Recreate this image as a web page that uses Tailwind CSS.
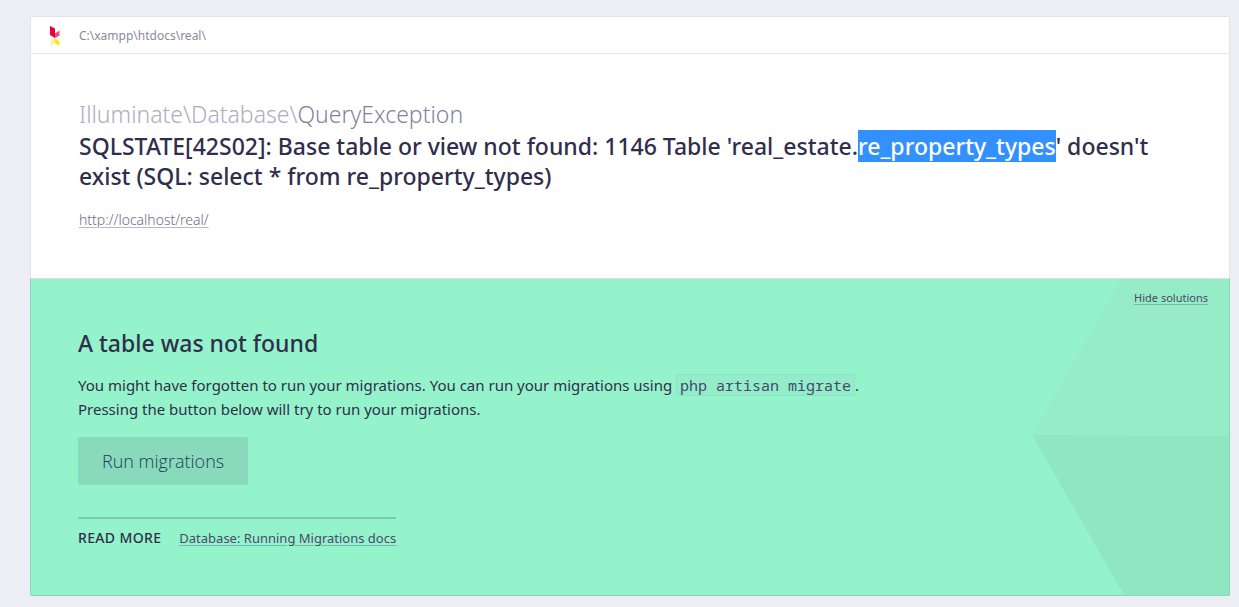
<!DOCTYPE html>
<html lang="en">
<head>
<meta charset="utf-8">
<title>A table was not found</title>
<script src="https://cdn.jsdelivr.net/npm/@tailwindcss/browser@4"></script>
</head>
<body class="min-h-screen bg-[#edeef3] pt-4 pr-[9px] pb-[11px] pl-[30px] font-['Noto_Sans',sans-serif] text-[#312e4d]">
<main>
  <section class="border border-b-0 border-[#e4e3ee] bg-white">
    <header class="flex h-[37px] items-center gap-[18px] border-b border-[#e4e3ee] pt-px pl-[18px] text-xs text-[#8b8a99]">
      <svg class="h-5 w-3" viewBox="0 0 12 20" aria-hidden="true">
        <path d="M1 0L6 2.500V12L1 9Z" fill="#e8003a"/>
        <path d="M6 7.500L10.500 4.500V9.500L6 12Z" fill="#ff4573"/>
        <path d="M6 12.500V17L1.500 19.500V15.500Z" fill="#fff08a"/>
        <path d="M6 12.500L10.500 15.500V19.500L6 17Z" fill="#ffe600"/>
      </svg>
      <span>C:\xampp\htdocs\real\</span>
    </header>
    <div class="px-12 pt-11 pb-12">
      <div class="text-[23px] leading-8 font-light text-[#8582a0]"><span class="text-[#aeacbf]">Illuminate\Database\</span>QueryException</div>
      <h1 class="mt-px text-[23px] leading-[30px] font-medium">SQLSTATE[42S02]: Base table or view not found: 1146 Table 'real_estate.<mark class="bg-[#3390ff] text-white">re_property_types</mark>' doesn't exist (SQL: select * from re_property_types)</h1>
      <div class="mt-[18px] text-sm leading-[21px] font-light"><a href="http://localhost/real/" class="text-[#6f6d83] underline decoration-[#b9b7cb] underline-offset-2">http://localhost/real/</a></div>
    </div>
  </section>
  <section class="relative overflow-hidden rounded-b-xs border border-t-[#dcdfe5] border-[#82d9b8] bg-[#94f3cb] px-[47px] pt-12 pb-[45px]">
    <svg class="absolute top-0 right-0 h-full w-[197px]" viewBox="0 0 197 316" preserveAspectRatio="none" aria-hidden="true">
      <path d="M89 0H197V157L0 156Z" fill="#96ecc7"/>
      <path d="M0 156L197 157V316H92Z" fill="#90e6c1"/>
    </svg>
    <button type="button" class="absolute top-[11px] right-[21px] text-[11px] leading-4 text-[#4b476d] underline decoration-[#75b9a9] underline-offset-2">Hide solutions</button>
    <div class="relative">
      <h2 class="text-[23px] leading-8 font-medium">A table was not found</h2>
      <p class="mt-[14px] text-[15px] leading-6">You might have forgotten to run your migrations. You can run your migrations using <code class="rounded-xs border border-[#8ae5c2] bg-[#92edc8] px-[3px] font-['Noto_Sans_Mono',monospace] text-[15px] leading-5 text-[#4b476d]">php artisan migrate</code>.<br>Pressing the button below will try to run your migrations.</p>
      <button type="button" class="mt-4 block h-12 rounded-xs bg-[#89dabd] px-6 font-['Open_Sans',sans-serif] text-lg font-light text-[#263a58]">Run migrations</button>
      <div class="mt-8 inline-flex items-center gap-[18px] border-t-2 border-[#7fc9b0] pt-[7px]">
        <h3 class="text-sm leading-6 font-medium tracking-wide">READ MORE</h3>
        <a href="#docs" class="text-[13px] leading-6 text-[#4b476d] underline decoration-[#75b9a9] underline-offset-2">Database: Running Migrations docs</a>
      </div>
    </div>
  </section>
</main>
</body>
</html>
